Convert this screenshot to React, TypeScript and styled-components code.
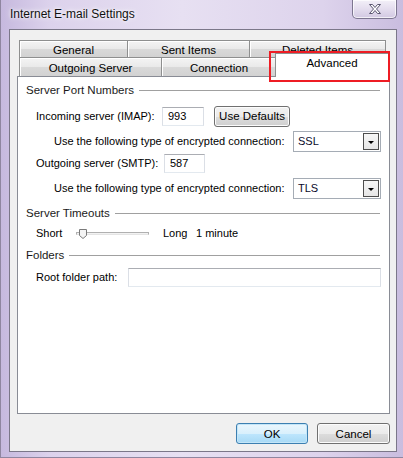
import React from 'react'
import styled, { createGlobalStyle } from 'styled-components'

const GlobalStyle = createGlobalStyle`
  html, body {
    margin: 0;
    padding: 0;
    background: #d6cde6;
  }
  body {
    font-family: 'Liberation Sans', Arial, sans-serif;
    font-size: 11px;
    color: #000;
  }
`

const Window = styled.div`
  width: 403px;
  height: 458px;
  box-sizing: border-box;
  display: flex;
  flex-direction: column;
  padding: 0 6px 6px 8px;
  background: linear-gradient(90deg, #c6b9de 0%, #dcd2ec 12%, #e7e0f2 45%, #ddd3ec 80%, #c9bddf 100%);
  border-left: 1px solid #8f86a0;
  box-shadow: inset 0 -1px 0 #8f86a0;
`

const TitleBar = styled.div`
  height: 29px;
  display: flex;
  justify-content: space-between;
  align-items: flex-start;
`

const Title = styled.div`
  padding: 7px 0 0 1px;
  font-size: 12px;
  color: #111;
  text-shadow: 0 0 6px #fff, 0 0 3px #fff;
`

const CloseButton = styled.div`
  width: 45px;
  height: 19px;
  box-sizing: border-box;
  border: 1px solid #7d7690;
  border-top: none;
  border-radius: 0 0 5px 5px;
  background: linear-gradient(180deg, #f3f0f8 0%, #e4ddee 50%, #d2c8e2 100%);
  box-shadow: inset 0 0 0 1px rgba(255, 255, 255, 0.7);
  display: flex;
  align-items: center;
  justify-content: center;
`

const Client = styled.div`
  flex: 1;
  display: flex;
  flex-direction: column;
  padding: 10px 7px 0 7px;
  background: #f0f0f0;
  border: 1px solid #7b7789;
`

const TabControl = styled.div`
  position: relative;
  width: 373px;
`

const TabRow = styled.div<{ $h: number }>`
  display: flex;
  align-items: flex-end;
  height: ${p => p.$h}px;
  padding-left: 2px;
`

const Tab = styled.div<{ $w: number }>`
  width: ${p => p.$w}px;
  height: 100%;
  box-sizing: border-box;
  border: 1px solid #8e8f8f;
  border-bottom: none;
  margin-right: -1px;
  background: linear-gradient(180deg, #f4f4f4 0%, #e9e9e9 50%, #d9d9d9 51%, #d2d2d2 100%);
  box-shadow: inset 1px 1px 0 #fff;
  display: flex;
  align-items: center;
  justify-content: center;
  padding-top: 1px;
  font-size: 11.5px;
`

const ActiveTab = styled.div<{ $w: number }>`
  position: relative;
  z-index: 2;
  width: ${p => p.$w}px;
  height: 24px;
  margin-bottom: -1px;
  margin-left: -1px;
  box-sizing: border-box;
  border: 1px solid #8e8f8f;
  border-bottom: none;
  background: #fff;
  display: flex;
  justify-content: center;
  padding-top: 3px;
  font-size: 11.5px;
`

const Annotation = styled.div`
  position: absolute;
  z-index: 3;
  left: 252px;
  top: 11px;
  width: 121px;
  height: 31px;
  box-sizing: border-box;
  border: 2px solid #ee1c24;
`

const Panel = styled.div`
  position: relative;
  z-index: 1;
  height: 338px;
  box-sizing: border-box;
  border: 1px solid #898c95;
  background: #fff;
  padding: 0 8px 0 8px;
  display: flex;
  flex-direction: column;
`

const GroupHeader = styled.div<{ $top: number }>`
  display: flex;
  align-items: center;
  height: 14px;
  margin-top: ${p => p.$top}px;
  font-size: 11.5px;
  color: #1a1a1a;
  &::after {
    content: '';
    flex: 1;
    height: 1px;
    margin: 1px 1px 0 5px;
    background: #a0a0a0;
  }
`

const Row = styled.div<{ $top: number; $indent: number }>`
  display: flex;
  align-items: center;
  height: 22px;
  margin-top: ${p => p.$top}px;
  padding-left: ${p => p.$indent}px;
`

const Label = styled.span<{ $w?: number }>`
  flex: none;
  width: ${p => (p.$w ? `${p.$w}px` : 'auto')};
  white-space: nowrap;
`

const TextBox = styled.div<{ $w?: number }>`
  flex: ${p => (p.$w ? 'none' : '1')};
  width: ${p => (p.$w ? `${p.$w}px` : 'auto')};
  height: 19px;
  box-sizing: border-box;
  border: 1px solid #dbdfe6;
  border-top-color: #abadb3;
  border-bottom-color: #e3e9ef;
  padding: 0 0 0 5px;
  display: flex;
  align-items: center;
  background: #fff;
`

const Button = styled.div<{ $w: number; $default?: boolean }>`
  width: ${p => p.$w}px;
  height: 21px;
  box-sizing: border-box;
  border: 1px solid ${p => (p.$default ? '#3c7fb1' : '#707070')};
  border-radius: 3px;
  background: ${p =>
    p.$default
      ? 'linear-gradient(180deg, #eaf6fd 0%, #d9f0fc 50%, #bee6fd 51%, #a7d9f5 100%)'
      : 'linear-gradient(180deg, #f2f2f2 0%, #ebebeb 50%, #dddddd 51%, #cfcfcf 100%)'};
  box-shadow: inset 0 0 0 1px ${p => (p.$default ? '#c4e6f8' : '#fcfcfc')};
  display: flex;
  align-items: center;
  justify-content: center;
  font-size: 11.5px;
`

const Select = styled.div`
  margin-left: auto;
  width: 88px;
  height: 21px;
  box-sizing: border-box;
  border: 1px solid #a5acb5;
  padding: 1px;
  display: flex;
  align-items: center;
  background: #fff;
`

const SelectValue = styled.span`
  flex: 1;
  padding-left: 3px;
  color: #0a0a2a;
`

const DropArrow = styled.div`
  width: 16px;
  height: 17px;
  box-sizing: border-box;
  border: 1px solid #4d4d4d;
  background: linear-gradient(180deg, #f7f7f7 0%, #e6e6e6 100%);
  display: flex;
  align-items: center;
  justify-content: center;
  &::after {
    content: '';
    margin-top: 2px;
    border-left: 3px solid transparent;
    border-right: 3px solid transparent;
    border-top: 3px solid #000;
  }
`

const SliderTrack = styled.div`
  position: relative;
  width: 73px;
  height: 3px;
  margin-right: 14px;
  box-sizing: border-box;
  border: 1px solid #b0b0b0;
  border-bottom-color: #e4e4e4;
  background: #f2f2f2;
`

const SliderThumb = styled.svg`
  position: absolute;
  left: 2px;
  top: -4px;
`

const ButtonBar = styled.div`
  display: flex;
  justify-content: flex-end;
  gap: 9px;
  width: 373px;
  margin-top: 9px;
`

const encryptLabel = 'Use the following type of encrypted connection:'

export default function App() {
  return (
    <>
      <GlobalStyle />
      <Window>
        <TitleBar>
          <Title>Internet E-mail Settings</Title>
          <CloseButton>
            <svg width="14" height="12" viewBox="0 0 14 12">
              <path
                d="M1.5 1.5h3l2.5 3 2.5-3h3l-4 4.5 4 4.5h-3L7 7.5 4.5 10.5h-3l4-4.5z"
                fill="#fff"
                stroke="#5a5670"
                strokeWidth="1"
                strokeLinejoin="round"
              />
            </svg>
          </CloseButton>
        </TitleBar>
        <Client>
          <TabControl>
            <TabRow $h={17}>
              <Tab $w={109}>General</Tab>
              <Tab $w={123}>Sent Items</Tab>
              <Tab $w={137}>Deleted Items</Tab>
            </TabRow>
            <TabRow $h={19}>
              <Tab $w={143}>Outgoing Server</Tab>
              <Tab $w={116}>Connection</Tab>
              <ActiveTab $w={114}>Advanced</ActiveTab>
            </TabRow>
            <Annotation />
            <Panel>
              <GroupHeader $top={6}>Server Port Numbers</GroupHeader>
              <Row $top={8} $indent={10}>
                <Label $w={126}>Incoming server (IMAP):</Label>
                <TextBox $w={42}>993</TextBox>
                <Button $w={76} style={{ marginLeft: 10 }}>Use Defaults</Button>
              </Row>
              <Row $top={3} $indent={28}>
                <Label>{encryptLabel}</Label>
                <Select>
                  <SelectValue>SSL</SelectValue>
                  <DropArrow />
                </Select>
              </Row>
              <Row $top={0} $indent={10}>
                <Label $w={128}>Outgoing server (SMTP):</Label>
                <TextBox $w={41}>587</TextBox>
              </Row>
              <Row $top={3} $indent={28}>
                <Label>{encryptLabel}</Label>
                <Select>
                  <SelectValue>TLS</SelectValue>
                  <DropArrow />
                </Select>
              </Row>
              <GroupHeader $top={7}>Server Timeouts</GroupHeader>
              <Row $top={2} $indent={10}>
                <Label $w={40}>Short</Label>
                <SliderTrack>
                  <SliderThumb width="8" height="10" viewBox="0 0 8 10">
                    <path d="M0.5 0.5h7v6l-3.5 3-3.5-3z" fill="#f4f4f4" stroke="#7a7a7a" />
                  </SliderThumb>
                </SliderTrack>
                <Label $w={33}>Long</Label>
                <Label>1 minute</Label>
              </Row>
              <GroupHeader $top={4}>Folders</GroupHeader>
              <Row $top={4} $indent={10}>
                <Label $w={92}>Root folder path:</Label>
                <TextBox />
              </Row>
            </Panel>
          </TabControl>
          <ButtonBar>
            <Button $w={72} $default>OK</Button>
            <Button $w={73}>Cancel</Button>
          </ButtonBar>
        </Client>
      </Window>
    </>
  )
}
